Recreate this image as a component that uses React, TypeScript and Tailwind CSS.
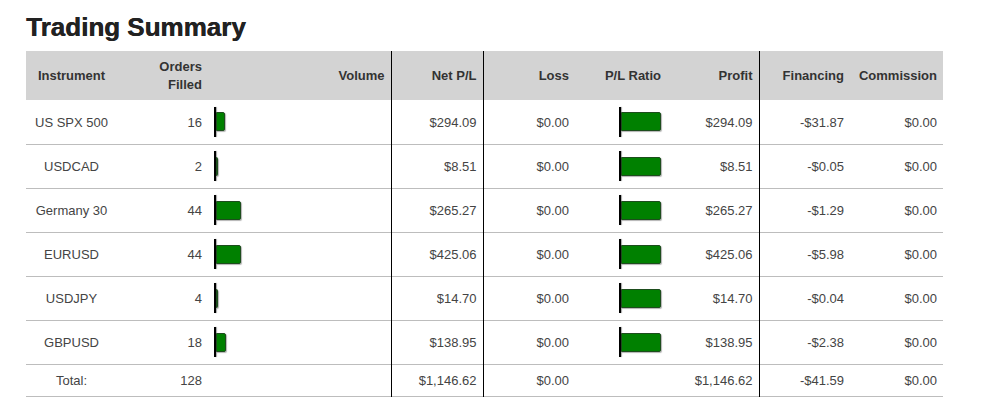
const rows = [
  { name: "US SPX 500", orders: 16, net: "$294.09", loss: "$0.00", profit: "$294.09", fin: "-$31.87", comm: "$0.00" },
  { name: "USDCAD", orders: 2, net: "$8.51", loss: "$0.00", profit: "$8.51", fin: "-$0.05", comm: "$0.00" },
  { name: "Germany 30", orders: 44, net: "$265.27", loss: "$0.00", profit: "$265.27", fin: "-$1.29", comm: "$0.00" },
  { name: "EURUSD", orders: 44, net: "$425.06", loss: "$0.00", profit: "$425.06", fin: "-$5.98", comm: "$0.00" },
  { name: "USDJPY", orders: 4, net: "$14.70", loss: "$0.00", profit: "$14.70", fin: "-$0.04", comm: "$0.00" },
  { name: "GBPUSD", orders: 18, net: "$138.95", loss: "$0.00", profit: "$138.95", fin: "-$2.38", comm: "$0.00" },
];

const Bar = ({ width }: { width: number }) => (
  <div className="flex items-center h-[30px]">
    {/* axis */}
    <div className="w-[2px] h-[30px] bg-black shadow-[1px_0_1px_rgba(0,0,0,0.35)]" />
    {width > 0 && (
      <div
        className="h-[19px] bg-[#008000] border border-[#1d4d1d] rounded-r-[2px] shadow-[1px_1px_1px_rgba(0,0,0,0.3)]"
        style={{ width }}
      />
    )}
  </div>
);

const th = "px-[6px] font-bold text-[13px] leading-[18px] text-[#333]";
const td = "px-[6px] pt-[2px] text-[13px] text-[#444]";

export default function App() {
  return (
    <div className="bg-white w-[983px] h-[404px] pl-[26px] pt-[11px] font-['Liberation_Sans',Arial,sans-serif]">
      <h1 className="text-[26px] leading-[32px] font-bold text-[#222] mb-[8px] [text-shadow:0.5px_0_0_#222]">
        Trading Summary
      </h1>
      <table className="table-fixed border-collapse w-[917px]">
        <colgroup>
          <col className="w-[91px]" />
          <col className="w-[91px]" />
          <col className="w-[183px]" />
          <col className="w-[92px]" />
          <col className="w-[92px]" />
          <col className="w-[92px]" />
          <col className="w-[92px]" />
          <col className="w-[91px]" />
          <col className="w-[93px]" />
        </colgroup>
        <thead>
          <tr className="bg-[#d3d3d3] h-[49px]">
            <th className={`${th} text-center`}>Instrument</th>
            <th className={`${th} text-right`}>
              Orders
              <br />
              Filled
            </th>
            <th className={`${th} text-right border-r border-black`}>Volume</th>
            <th className={`${th} text-right border-r border-black`}>Net P/L</th>
            <th className={`${th} text-right`}>Loss</th>
            <th className={`${th} text-right`}>P/L Ratio</th>
            <th className={`${th} text-right border-r border-black`}>Profit</th>
            <th className={`${th} text-right`}>Financing</th>
            <th className={`${th} text-right`}>Commission</th>
          </tr>
        </thead>
        <tbody>
          {rows.map((r) => (
            <tr key={r.name} className="h-[44px] border-b border-[#bdbdbd]">
              <td className={`${td} text-center`}>{r.name}</td>
              <td className={`${td} text-right`}>{r.orders}</td>
              <td className="px-[6px] border-r border-black">
                <Bar width={Math.round((r.orders / 44) * 25)} />
              </td>
              <td className={`${td} text-right border-r border-black`}>{r.net}</td>
              <td className={`${td} text-right`}>{r.loss}</td>
              <td className="px-[6px]">
                <div className="flex justify-end">
                  <Bar width={40} />
                </div>
              </td>
              <td className={`${td} text-right border-r border-black`}>{r.profit}</td>
              <td className={`${td} text-right`}>{r.fin}</td>
              <td className={`${td} text-right`}>{r.comm}</td>
            </tr>
          ))}
          <tr className="h-[32px] border-b border-[#bdbdbd]">
            <td className={`${td} text-center`}>Total:</td>
            <td className={`${td} text-right`}>128</td>
            <td className={`${td} border-r border-black`} />
            <td className={`${td} text-right border-r border-black`}>$1,146.62</td>
            <td className={`${td} text-right`}>$0.00</td>
            <td className={td} />
            <td className={`${td} text-right border-r border-black`}>$1,146.62</td>
            <td className={`${td} text-right`}>-$41.59</td>
            <td className={`${td} text-right`}>$0.00</td>
          </tr>
        </tbody>
      </table>
    </div>
  );
}
